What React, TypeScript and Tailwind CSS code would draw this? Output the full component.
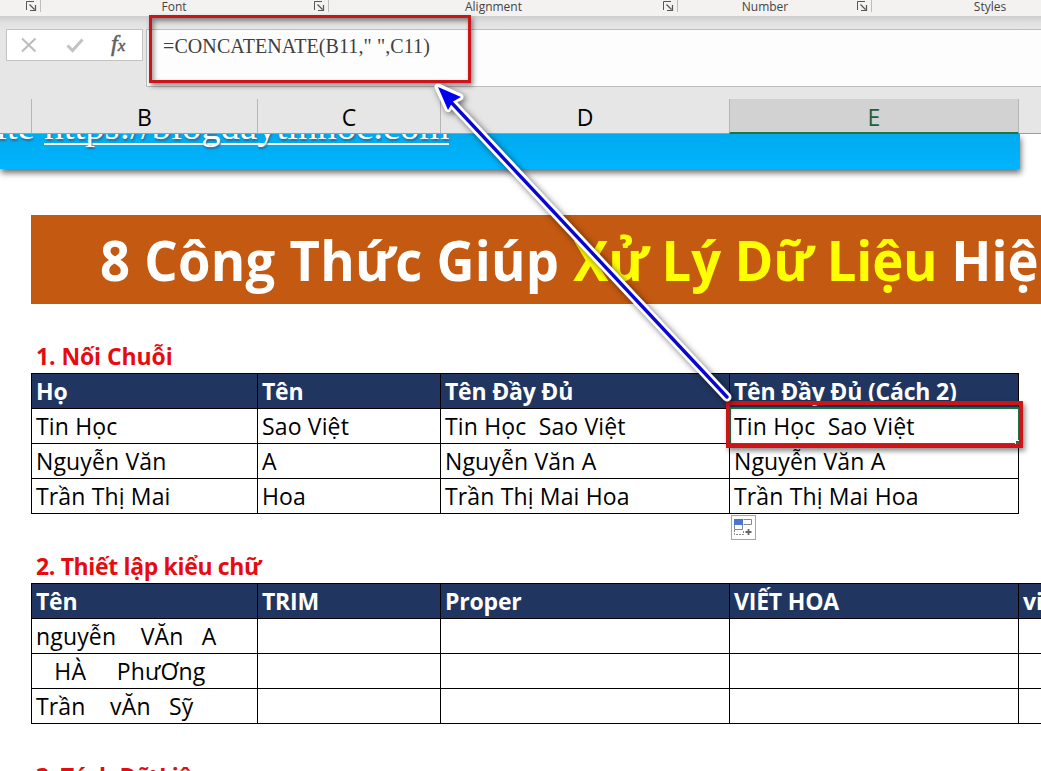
import type { ReactNode } from "react";

const sans = "font-['Open_Sans','Noto_Sans',sans-serif]";

function Launcher() {
  return (
    <svg className="block h-[12px] w-[12px]" viewBox="0 0 12 12" fill="none" stroke="#555">
      <path d="M1.5 10V1.5H9" />
      <path d="M4.5 4.5L9.5 9.5M10.5 5V10.5H5" strokeWidth="1.2" />
    </svg>
  );
}

function RibbonGroup({ label, className }: { label: string; className: string }) {
  return (
    <div className={`flex h-[16px] shrink-0 ${className}`}>
      <span className="flex-1 text-center text-[12px] leading-[14px] text-[#444]">{label}</span>
      <div className="h-[12px] w-[16px] border-r border-[#bdbdbd]">
        <Launcher />
      </div>
    </div>
  );
}

function ColumnHead({ letter, className }: { letter: string; className: string }) {
  return (
    <div className={`h-[34px] shrink-0 text-center text-[23px] leading-[37px] ${className}`}>
      {letter}
    </div>
  );
}

function Cell({ children, head = false }: { children?: ReactNode; head?: boolean }) {
  return (
    <div
      className={`h-[35px] overflow-hidden border-r border-b border-black pl-[4px] text-[23px] leading-[34px] whitespace-pre ${
        head ? "bg-[#203660] font-bold tracking-[-0.2px] text-white" : "tracking-[0.15px] text-black"
      }`}
    >
      {children}
    </div>
  );
}

function SectionTitle({ children, className }: { children: ReactNode; className: string }) {
  return (
    <h2 className={`h-[35px] pl-[5px] text-[23px] leading-[35px] font-bold whitespace-pre text-[#e60b0f] ${className}`}>
      {children}
    </h2>
  );
}

const names = [
  ["Tin Học", "Sao Việt", "Tin Học  Sao Việt", "Tin Học  Sao Việt"],
  ["Nguyễn Văn", "A", "Nguyễn Văn A", "Nguyễn Văn A"],
  ["Trần Thị Mai", "Hoa", "Trần Thị Mai Hoa", "Trần Thị Mai Hoa"],
];

const styles = ["nguyễn    VĂn   A", "   HÀ     PhưƠng", "Trần    vĂn   Sỹ"];

export default function App() {
  return (
    <div className={`relative h-[771px] w-[1041px] overflow-hidden bg-white ${sans}`}>
      <header className="relative z-10 flex h-[134px] flex-col bg-[#e6e6e6]">
        <div className="flex h-[16px] overflow-hidden bg-[#f3f2f1]">
          <div className="flex h-[12px] w-[41px] shrink-0 justify-end border-r border-[#bdbdbd] pr-[3px]">
            <Launcher />
          </div>
          <RibbonGroup label="Font" className="-ml-[6px] w-[294px]" />
          <RibbonGroup label="Alignment" className="-ml-[4px] w-[353px]" />
          <RibbonGroup label="Number" className="-ml-[4px] w-[198px]" />
          <div className="w-[236px] shrink-0 text-center text-[12px] leading-[14px] text-[#444]">Styles</div>
        </div>
        <div className="h-[13px] shrink-0 bg-linear-to-b from-[#cdcdcd] via-[#e0e0e0] to-[#e6e6e6]" />
        <div className="flex h-[58px] shrink-0 items-start">
          <div className="ml-[6px] flex h-[32px] w-[137px] items-center border border-[#c3c3c3] bg-white">
            <svg className="ml-[13px] h-[16px] w-[18px]" viewBox="0 0 18 16" fill="none" stroke="#bcbcbc" strokeWidth="2">
              <path d="M2 1.5L15.5 14.5M15.5 1.5L2 14.5" />
            </svg>
            <svg className="ml-[27px] h-[16px] w-[20px]" viewBox="0 0 20 16" fill="none" stroke="#c2c2c2" strokeWidth="3">
              <path d="M2.5 8.5L7.5 13.5L17.5 2.5" />
            </svg>
            <span className="ml-[26px] pb-[4px] font-['Liberation_Serif',serif] text-[24px] leading-none text-[#606060] italic [-webkit-text-stroke:0.5px_#606060]">
              f<span className="text-[17px]">x</span>
            </span>
          </div>
          <div className="ml-[3px] h-[58px] flex-1 border-y border-l border-[#bdbdbd] bg-[#fdfdfd] pt-[5px] pl-[16px] font-['Liberation_Serif',serif] text-[20px] leading-[23px] tracking-[0.1px] whitespace-pre text-[#404040]">
            =CONCATENATE(B11," ",C11)
          </div>
        </div>
        <div className="mt-[12px] flex h-[35px] border-b border-[#9c9c9c]">
          <div className="w-[32px] shrink-0 border-r border-[#b5b5b5]" />
          <ColumnHead letter="B" className="w-[226px] border-r border-[#b5b5b5]" />
          <ColumnHead letter="C" className="w-[183px] border-r border-[#b5b5b5]" />
          <ColumnHead letter="D" className="w-[288px]" />
          <div className="h-[35px] w-[290px] shrink-0 border-x border-b-2 border-[#b5b5b5] border-b-[#217346] bg-[#d2d2d2] text-[#245c3e]">
            <ColumnHead letter="E" className="w-full" />
          </div>
        </div>
      </header>

      <main>
        <div className="flex h-[35px] w-[1020px] bg-linear-to-b from-[#00abee] to-[#00b4ff] shadow-[1px_4px_6px_0px_#707070]">
          <p className="-mt-[31px] -ml-[4px] h-[46px] font-['Liberation_Serif',serif] text-[38.7px] leading-[46px] whitespace-pre text-white [text-shadow:1px_2px_2px_#35668c]">
            ite{" "}
            <span className="inline-block h-[42px] border-b-2 border-white leading-[46px]">https://blogdaytinhoc.com</span>
          </p>
        </div>

        <div className="mt-[46px] ml-[31px] h-[89px] w-[1010px] overflow-hidden bg-[#c45911] pl-[69px]">
          <h1 className="w-[1100px] origin-left scale-x-[0.938] text-[56px] leading-[89px] font-bold whitespace-pre text-white">
            <span className="tracking-[0.3px]">8 Công Thức Giúp </span>
            <span className="tracking-[-0.1px] text-[#ffff00]">Xử Lý Dữ Liệu</span> Hiệ
          </h1>
        </div>

        <section className="mt-[35px] ml-[31px] w-[988px]">
          <SectionTitle className="tracking-[-0.1px]">1. Nối Chuỗi</SectionTitle>
          <div className="-mt-[1px] grid grid-cols-[226px_183px_289px_289px] border-t border-l border-black">
            {["Họ", "Tên", "Tên Đầy Đủ", "Tên Đầy Đủ (Cách 2)"].map((h) => (
              <Cell key={h} head>
                {h}
              </Cell>
            ))}
            {names.flatMap((row, r) => row.map((v, c) => <Cell key={`${r}-${c}`}>{v}</Cell>))}
          </div>
        </section>

        <section className="mt-[35px] ml-[31px] w-[1277px]">
          <SectionTitle className="tracking-[-0.35px]">2. Thiết lập kiểu chữ</SectionTitle>
          <div className="-mt-[1px] grid grid-cols-[226px_183px_289px_289px_289px] border-t border-l border-black">
            {["Tên", "TRIM", "Proper", "VIẾT HOA", "viết thường"].map((h) => (
              <Cell key={h} head>
                {h}
              </Cell>
            ))}
            {styles.flatMap((v, r) => [0, 1, 2, 3, 4].map((c) => <Cell key={`${r}-${c}`}>{c === 0 ? v : null}</Cell>))}
          </div>
        </section>

        <section className="mt-[35px] ml-[31px]">
          <SectionTitle className="tracking-[-0.3px]">3. Tách Dữ Liệu</SectionTitle>
        </section>
      </main>

      <div className="absolute top-[407px] left-[729px] h-[38px] w-[291px] border-2 border-[#217346]" />
      <div className="absolute top-[440px] left-[1015px] h-[5px] w-[5px] border-t border-l border-white bg-[#217346]" />

      <div className="absolute top-[515px] left-[731px] h-[25px] w-[25px] border border-[#a6a6a6] bg-white">
        <svg className="h-[23px] w-[23px]" viewBox="0 0 23 23" fill="none" stroke="#888">
          <path d="M11.5 3.5H19.5V8.5H11.5M2.5 8.5V13.5H10.5V8.5" />
          <rect x="2.5" y="3.5" width="8" height="5" fill="#4577cf" stroke="#4577cf" />
          <path d="M2.5 14V18.5H11.5V14" strokeDasharray="2 1" />
          <path d="M16.5 13V19M13.5 16H19.5" stroke="#666" strokeWidth="1.8" />
        </svg>
      </div>

      <div className="absolute top-[15px] left-[149px] z-20 h-[68px] w-[322px] border-[3px] border-[#cb1519] shadow-[2px_3px_5px_rgba(0,0,0,0.45),inset_2px_3px_5px_rgba(0,0,0,0.4)]" />
      <div className="absolute top-[401px] left-[726px] z-20 h-[47px] w-[297px] border-4 border-[#cb1519] shadow-[2px_3px_5px_rgba(0,0,0,0.45),inset_1px_2px_3px_rgba(0,0,0,0.2)]" />

      <svg
        className="absolute top-0 left-0 z-30 h-[771px] w-[1041px] [filter:drop-shadow(2px_2px_3px_rgba(0,0,0,0.55))]"
        viewBox="0 0 1041 771"
        strokeLinejoin="round"
        strokeLinecap="round"
      >
        <path d="M450 101L727 397" stroke="#fff" strokeWidth="9" />
        <path d="M438 87L460 97L452.5 100.5L448 108.5Z" fill="#fff" stroke="#fff" strokeWidth="7" />
        <path d="M450 101L727 397" stroke="#0a06d0" strokeWidth="3.4" />
        <path d="M438 87L461 97L453 101.5L448 110Z" fill="#0000f0" />
      </svg>
    </div>
  );
}
